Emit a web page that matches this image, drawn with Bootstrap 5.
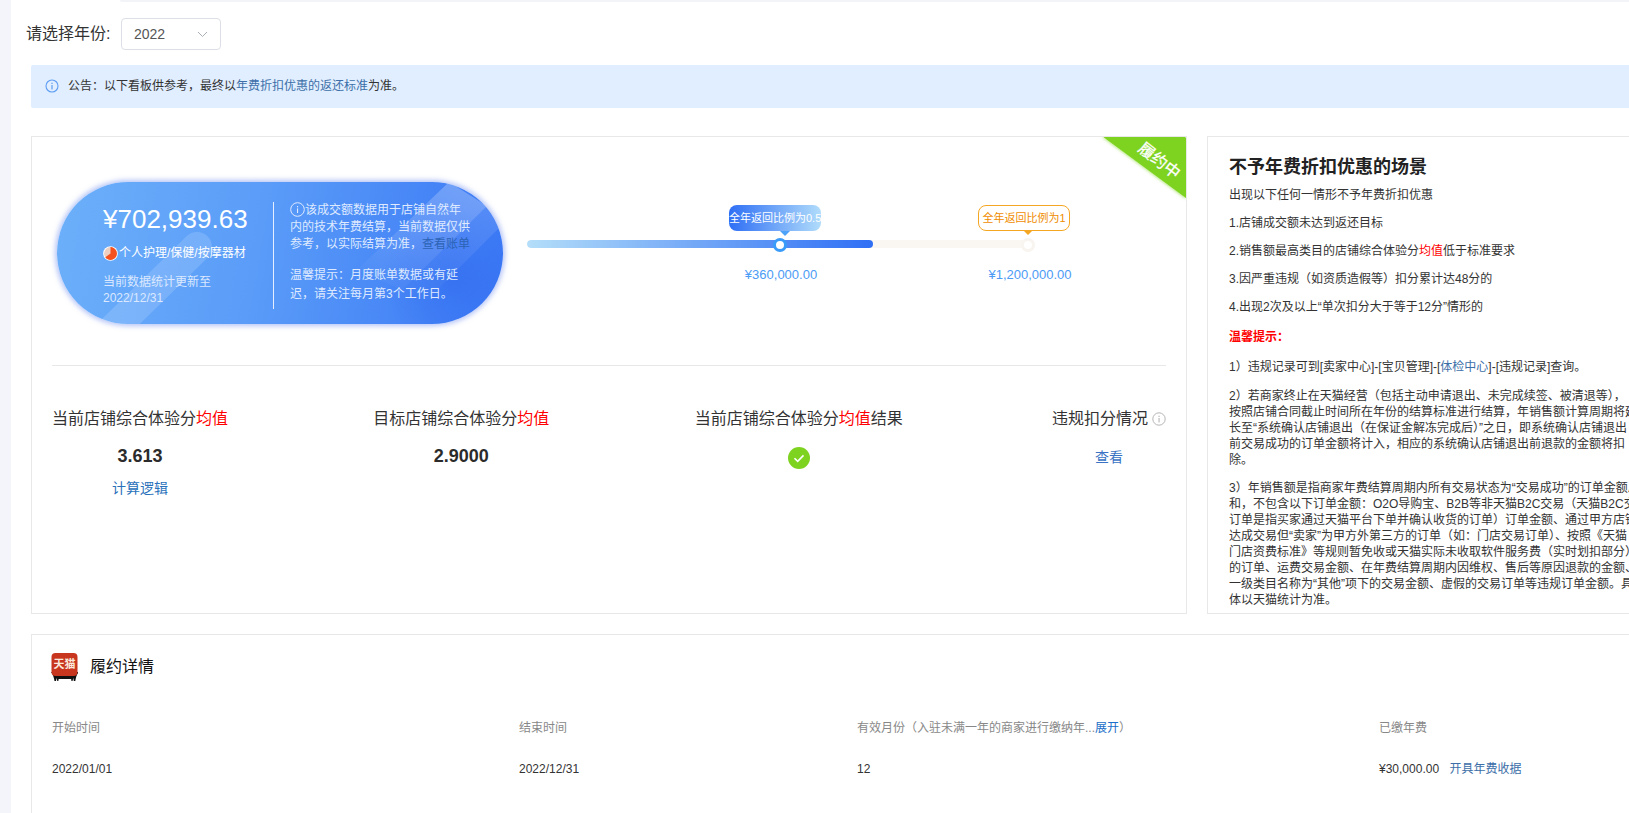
<!DOCTYPE html>
<html lang="zh-CN">
<head>
<meta charset="utf-8">
<title>年费看板</title>
<link href="https://cdn.jsdelivr.net/npm/bootstrap@5.3.0/dist/css/bootstrap.min.css" rel="stylesheet">
<style>
html,body{height:100%;overflow:hidden;background:#fff}
body{font-family:"Liberation Sans","Noto Sans CJK SC",sans-serif;color:#333;font-size:12px;width:1629px;height:813px}
.shell{width:1700px;height:813px}
.side-strip{width:11px;background:#f3f5fa;flex:none}
.page-main{flex:1;min-width:0;background:#fff}
.top-strip{height:2px;margin-left:109px;background:#f3f4f8;border-radius:0 0 0 6px}
.year-row{margin:16px 0 0 15px;height:32px}
.year-label{font-size:16px;width:95px;color:#333}
.year-box{width:100px;height:32px;border:1px solid #dcdfe6;border-radius:4px;padding:0 12px;font-size:14px;color:#555;background:#fff}
.notice{margin:15px 0 0 20px;height:43px;padding:0 0 2px 14px;background:#e0eeff;border:0;border-radius:2px;font-size:12px;color:#333;gap:9px}
.notice a,.rule-link{color:#3c6ea8;text-decoration:none}
.cards-row{margin:28px 0 0 20px;gap:20px}
.panel-main{width:1156px;height:478px;flex:none;border:1px solid #e8e8e8;border-radius:0;padding:45px 20px 0;overflow:hidden}
.panel-rules{width:455px;height:478px;flex:none;border:1px solid #e8e8e8;border-radius:0;padding:17px 21px 0;overflow:hidden}
.ribbon{position:absolute;top:-1px;right:0;width:84px;height:62px;filter:drop-shadow(0 1px 1.5px rgba(126,211,33,.6))}
.ribbon-text{position:absolute;top:15px;right:3px;font-size:16px;color:#fff;transform:rotate(38deg);line-height:18px;-webkit-text-stroke:.3px #fff}
.pill{width:446px;height:142px;margin-left:5px;border-radius:71px;flex:none;background:linear-gradient(100deg,#6cb0fa 0%,#5a9cf8 45%,#3a77f5 100%);box-shadow:0 0 5px 2px rgba(110,140,240,.5);color:#fff;overflow:hidden}
.pill-art{position:absolute;inset:0}
.pill-left{width:216px;padding:20px 0 0 46px;position:relative}
.pill-amount{font-size:26px;line-height:34px;white-space:nowrap}
.pill-cat{margin-top:9px;line-height:16px;gap:1px;white-space:nowrap}
.pill-time{margin-top:13px;line-height:16px;color:#dbe8ff;white-space:nowrap}
.pill-bar{width:1px;height:107px;background:#e4eefe;margin-top:20px;position:relative;flex:none}
.pill-right{padding:20px 0 0 16px;position:relative;color:#dfeaff;white-space:nowrap}
.pill-right p{margin:0;line-height:17px}
.pill-right p+p{margin-top:13px;line-height:19px}
.pill-right a{color:#2c63b5;text-decoration:none}
.slider-zone{width:501px;margin-left:24px;height:142px;flex:none}
.slider-track{height:8px;margin-top:58px;background:#faf6f2;border-radius:4px;overflow:hidden}
.slider-fill{background:linear-gradient(90deg,#b4def9,#2f6ff5);border-radius:4px}
.tip{position:absolute;top:23px;width:92px;height:26px;border-radius:8px;font-size:11px;line-height:26px;text-align:center;white-space:nowrap;transform:translateX(-50%)}
.tip-blue{left:248px;color:#fff;background:linear-gradient(90deg,#2f6ff5,#b0dcfb)}
.tip-blue::after{content:"";position:absolute;left:51px;bottom:-5px;border:5px solid transparent;border-bottom:0;border-top-color:#4da3f8}
.tip-orange{left:497px;color:#f08c00;background:#fff;border:1px solid #f5a623;line-height:24px}
.tip-orange::after{content:"";position:absolute;left:50%;bottom:-5px;margin-left:-1px;border:5px solid transparent;border-bottom:0;border-top-color:#f5a623}
.knob{position:absolute;top:56px;width:14px;height:14px;border-radius:50%;transform:translateX(-50%);background:#fff}
.knob-on{left:253px;border:3px solid #3a9bf8}
.knob-off{left:501px;border:3px solid #f8f4ef}
.mile{position:absolute;top:85px;font-size:13px;line-height:16px;color:#4c9bf5;transform:translateX(-50%);white-space:nowrap}
.mile-a{left:254px}
.mile-b{left:503px}
.rule-line{margin:41px 0 0;border:0;border-top:1px solid #e8e8e8;opacity:1}
.stats{margin-top:42px}
.stat-title{font-size:16px;line-height:22px;color:#333;white-space:nowrap}
.hot{color:#f00}
.stat-value{font-size:18px;font-weight:700;line-height:24px;margin-top:14px;color:#2b2b2b}
.stat-link{display:block;font-size:14px;line-height:20px;margin-top:10px;color:#2a71bb;text-decoration:none}
.stat-icon{height:24px;margin-top:17px}
.stat-look{display:block;font-size:14px;line-height:20px;margin-top:17px;color:#3a73c4;text-decoration:none}
.rules-title{font-size:18px;font-weight:700;line-height:26px;margin:0 0 7px;color:#222}
.panel-rules p{margin:0 0 12px;line-height:16px;font-size:12px;white-space:nowrap;color:#333}
.panel-rules p.warm{color:#f00;font-weight:700;margin-top:2px;margin-bottom:14px}
.panel-rules p.gap-after{margin-bottom:13px}
.panel-detail{margin:20px 0 0 20px;width:1640px;height:200px;border:1px solid #e8e8e8;border-radius:0;padding:18px 20px 0 19px}
.detail-title{font-size:16px;color:#111;gap:12px;line-height:28px}
.detail-grid{display:grid;grid-template-columns:467px 338px 522px 1fr;margin:39px 0 0 1px;row-gap:25px;line-height:16px;white-space:nowrap}
.detail-label{color:#888}
.detail-label a{color:#1b6fc8;text-decoration:none}
.detail-value{color:#333}
.detail-value a{color:#3c6ea8;text-decoration:none;margin-left:7px}
</style>
</head>
<body>
<div class="shell d-flex">
  <div class="side-strip"></div>
  <div class="page-main">
    <div class="top-strip"></div>

    <div class="year-row d-flex align-items-center">
      <div class="year-label">请选择年份:</div>
      <div class="year-box d-flex align-items-center justify-content-between">
        <span>2022</span>
        <svg width="11" height="7" viewBox="0 0 11 7" aria-hidden="true"><path d="M1 1l4.5 4.5L10 1" fill="none" stroke="#a9adb5" stroke-width="1"/></svg>
      </div>
    </div>

    <div class="notice alert d-flex align-items-center mb-0" role="alert">
      <svg width="14" height="14" viewBox="0 0 14 14" aria-hidden="true"><circle cx="7" cy="7" r="6" fill="none" stroke="#5f9df2" stroke-width="1.1"/><rect x="6.4" y="6" width="1.2" height="4.4" fill="#5f9df2"/><rect x="6.4" y="3.7" width="1.2" height="1.3" fill="#5f9df2"/></svg>
      <span>公告：以下看板供参考，最终以<a href="#">年费折扣优惠的返还标准</a>为准。</span>
    </div>

    <div class="cards-row d-flex align-items-start">
      <div class="panel-main card position-relative">
        <svg class="ribbon" viewBox="0 0 84 62" aria-hidden="true"><polygon points="0,0 82,0 84,2 84,62" fill="#7ed321"/></svg>
        <div class="ribbon-text">履约中</div>

        <div class="d-flex">
          <div class="pill d-flex position-relative">
            <svg class="pill-art" width="446" height="142" viewBox="0 0 446 142" aria-hidden="true">
              <defs>
                <linearGradient id="bandFade" x1="1" y1="0" x2="0" y2="1"><stop offset="0.1" stop-color="#fff" stop-opacity=".26"/><stop offset="0.95" stop-color="#fff" stop-opacity="0"/></linearGradient>
                <linearGradient id="bandFadeTwo" x1="1" y1="0" x2="0" y2="1"><stop offset="0" stop-color="#fff" stop-opacity=".12"/><stop offset="1" stop-color="#fff" stop-opacity="0"/></linearGradient>
                <radialGradient id="blobFade"><stop offset="0" stop-color="#2f69ee" stop-opacity=".55"/><stop offset="1" stop-color="#2f69ee" stop-opacity="0"/></radialGradient>
              </defs>
              <line x1="140" y1="65" x2="48" y2="155" stroke="#fff" stroke-opacity=".15" stroke-width="30" stroke-linecap="round"/>
              <circle cx="395" cy="95" r="70" fill="url(#blobFade)"/>
              <polygon points="392,0 430,24 345,108 300,88" fill="url(#bandFade)"/>
              <polygon points="430,24 446,42 370,118 345,108" fill="url(#bandFadeTwo)"/>
            </svg>
            <div class="pill-left">
              <div class="pill-amount">¥702,939.63</div>
              <div class="pill-cat d-flex align-items-center">
                <svg width="15" height="15" viewBox="0 0 15 15" aria-hidden="true"><circle cx="7.5" cy="7.5" r="7.3" fill="#fff"/><circle cx="7.5" cy="7.5" r="6.4" fill="#eccfc0"/><path d="M7.5 7.5V1.1A6.4 6.4 0 1 1 2.3 11.2z" fill="#f4511e"/></svg>
                <span>个人护理/保健/按摩器材</span>
              </div>
              <div class="pill-time">当前数据统计更新至<br>2022/12/31</div>
            </div>
            <div class="pill-bar"></div>
            <div class="pill-right">
              <p><svg width="15" height="15" viewBox="0 0 15 15" class="align-text-bottom" aria-hidden="true"><circle cx="7.5" cy="7.5" r="6.8" fill="none" stroke="#dfeaff" stroke-width="1"/><rect x="7" y="6.4" width="1.1" height="4.6" fill="#dfeaff"/><rect x="7" y="4" width="1.1" height="1.3" fill="#dfeaff"/></svg>该成交额数据用于店铺自然年<br>内的技术年费结算，当前数据仅供<br>参考，以实际结算为准，<a href="#">查看账单</a></p>
              <p>温馨提示：月度账单数据或有延<br>迟，请关注每月第3个工作日。</p>
            </div>
          </div>

          <div class="slider-zone position-relative">
            <div class="tip tip-blue">全年返回比例为0.5</div>
            <div class="tip tip-orange">全年返回比例为1</div>
            <div class="slider-track progress">
              <div class="slider-fill progress-bar" style="width:69%"></div>
            </div>
            <div class="knob knob-on"></div>
            <div class="knob knob-off"></div>
            <div class="mile mile-a">¥360,000.00</div>
            <div class="mile mile-b">¥1,200,000.00</div>
          </div>
        </div>

        <hr class="rule-line">

        <div class="stats d-flex justify-content-between text-center">
          <div>
            <div class="stat-title">当前店铺综合体验分<span class="hot">均值</span></div>
            <div class="stat-value">3.613</div>
            <a class="stat-link" href="#">计算逻辑</a>
          </div>
          <div>
            <div class="stat-title">目标店铺综合体验分<span class="hot">均值</span></div>
            <div class="stat-value">2.9000</div>
          </div>
          <div class="me-1">
            <div class="stat-title">当前店铺综合体验分<span class="hot">均值</span>结果</div>
            <div class="stat-icon"><svg width="22" height="22" viewBox="0 0 22 22" aria-hidden="true"><circle cx="11" cy="11" r="11" fill="#7ed321"/><path d="M6.5 11.2l3.2 3.2 5.8-6" fill="none" stroke="#fff" stroke-width="1.6"/></svg></div>
          </div>
          <div>
            <div class="stat-title d-flex align-items-center gap-1">违规扣分情况<svg width="14" height="14" viewBox="0 0 14 14" aria-hidden="true"><circle cx="7" cy="7" r="6.2" fill="none" stroke="#b5b5b5" stroke-width="1"/><rect x="6.5" y="6" width="1.1" height="4.4" fill="#b5b5b5"/><rect x="6.5" y="3.7" width="1.1" height="1.3" fill="#b5b5b5"/></svg></div>
            <a class="stat-look" href="#">查看</a>
          </div>
        </div>
      </div>

      <div class="panel-rules card">
        <h2 class="rules-title">不予年费折扣优惠的场景</h2>
        <p>出现以下任何一情形不予年费折扣优惠</p>
        <p>1.店铺成交额未达到返还目标</p>
        <p>2.销售额最高类目的店铺综合体验分<span class="hot">均值</span>低于标准要求</p>
        <p>3.因严重违规（如资质造假等）扣分累计达48分的</p>
        <p>4.出现2次及以上“单次扣分大于等于12分”情形的</p>
        <p class="warm">温馨提示：</p>
        <p class="gap-after">1）违规记录可到[卖家中心]-[宝贝管理]-[<a class="rule-link" href="#">体检中心</a>]-[违规记录]查询。</p>
        <p>2）若商家终止在天猫经营（包括主动申请退出、未完成续签、被清退等），<br>按照店铺合同截止时间所在年份的结算标准进行结算，年销售额计算周期将延<br>长至“系统确认店铺退出（在保证金解冻完成后）”之日，即系统确认店铺退出<br>前交易成功的订单金额将计入，相应的系统确认店铺退出前退款的金额将扣<br>除。</p>
        <p>3）年销售额是指商家年费结算周期内所有交易状态为“交易成功”的订单金额总<br>和，不包含以下订单金额：O2O导购宝、B2B等非天猫B2C交易（天猫B2C交易<br>订单是指买家通过天猫平台下单并确认收货的订单）订单金额、通过甲方店铺<br>达成交易但“卖家”为甲方外第三方的订单（如：门店交易订单）、按照《天猫<br>门店资费标准》等规则暂免收或天猫实际未收取软件服务费（实时划扣部分）<br>的订单、运费交易金额、在年费结算周期内因维权、售后等原因退款的金额、<br>一级类目名称为“其他”项下的交易金额、虚假的交易订单等违规订单金额。具<br>体以天猫统计为准。</p>
      </div>
    </div>

    <div class="panel-detail card">
      <div class="detail-title d-flex align-items-center">
        <svg width="27" height="28" viewBox="0 0 27 28" aria-hidden="true">
          <path d="M0 19c2 2 3 6 3.500 9h1.500l.5-3 .8 3h1l.6-3h12l.6 3h1l.8-3 .5 3h1.500c.5-3 1.500-7 3.500-9z" fill="#111"/>
          <rect x=".5" width="26" height="23" rx="4" fill="#c8361f"/>
          <rect x="6" y="23" width="15" height="3" fill="#111"/>
          <text x="13.500" y="15" text-anchor="middle" font-size="11" font-weight="700" fill="#fbe9dc" font-family="Noto Sans CJK SC, sans-serif">天猫</text>
        </svg>
        <span>履约详情</span>
      </div>
      <div class="detail-grid">
        <div class="detail-label">开始时间</div>
        <div class="detail-label">结束时间</div>
        <div class="detail-label">有效月份（入驻未满一年的商家进行缴纳年...<a href="#">展开</a>）</div>
        <div class="detail-label">已缴年费</div>
        <div class="detail-value">2022/01/01</div>
        <div class="detail-value">2022/12/31</div>
        <div class="detail-value">12</div>
        <div class="detail-value">¥30,000.00 <a href="#">开具年费收据</a></div>
      </div>
    </div>
  </div>
</div>
<script src="https://cdn.jsdelivr.net/npm/bootstrap@5.3.0/dist/js/bootstrap.bundle.min.js"></script>
</body>
</html>
